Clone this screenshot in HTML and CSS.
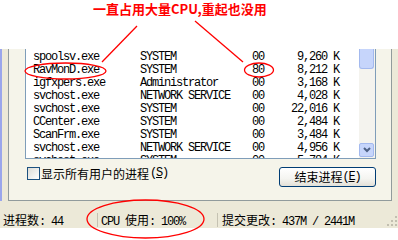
FILE: index.html
```html
<!DOCTYPE html>
<html lang="zh-CN">
<head>
  <meta charset="UTF-8" />
  <title>任务管理器</title>
  <link rel="stylesheet" href="styles.css">
</head>
<body>
  <div class="note">一直占用大量CPU,重起也没用</div>

  <!-- Processes tab -->
  <div class="window">
    <div class="page">
      <div class="list">
        <div class="rows">
          <div class="row"><span class="c-name">spoolsv.exe</span><span class="c-user">SYSTEM</span><span class="c-cpu">00</span><span class="c-mem">9,260 K</span></div>
          <div class="row"><span class="c-name">RavMonD.exe</span><span class="c-user">SYSTEM</span><span class="c-cpu">80</span><span class="c-mem">8,212 K</span></div>
          <div class="row"><span class="c-name">igfxpers.exe</span><span class="c-user">Administrator</span><span class="c-cpu">00</span><span class="c-mem">3,168 K</span></div>
          <div class="row"><span class="c-name">svchost.exe</span><span class="c-user">NETWORK SERVICE</span><span class="c-cpu">00</span><span class="c-mem">4,028 K</span></div>
          <div class="row"><span class="c-name">svchost.exe</span><span class="c-user">SYSTEM</span><span class="c-cpu">00</span><span class="c-mem">22,016 K</span></div>
          <div class="row"><span class="c-name">CCenter.exe</span><span class="c-user">SYSTEM</span><span class="c-cpu">00</span><span class="c-mem">2,484 K</span></div>
          <div class="row"><span class="c-name">ScanFrm.exe</span><span class="c-user">SYSTEM</span><span class="c-cpu">00</span><span class="c-mem">3,484 K</span></div>
          <div class="row"><span class="c-name">svchost.exe</span><span class="c-user">NETWORK SERVICE</span><span class="c-cpu">00</span><span class="c-mem">4,956 K</span></div>
          <div class="row"><span class="c-name">svchost.exe</span><span class="c-user">SYSTEM</span><span class="c-cpu">00</span><span class="c-mem">5,784 K</span></div>
        </div>
        <div class="scrollbar">
          <div class="thumb"></div>
          <div class="track"></div>
          <div class="arrow">
            <svg width="8" height="6" viewBox="0 0 8 6"><polyline points="1,1 4,4 7,1" fill="none" stroke="#4d6185" stroke-width="2"/></svg>
          </div>
        </div>
      </div>

      <div class="controls">
        <div class="check"><span class="box"></span>显示所有用户的进程<span class="lat">(<u>S</u>)</span></div>
        <div class="button">结束进程<span class="lat">(<u>E</u>)</span></div>
      </div>
    </div>
  </div>

  <div class="status">
    <div class="cell c1">进程数<span class="lat">: 44</span></div>
    <div class="cell c2"><span class="lat">CPU </span>使用<span class="lat">: 100%</span></div>
    <div class="cell c3">提交更改<span class="lat">: 437M / 2441M</span></div>
    <svg class="grip" width="12" height="12" viewBox="0 0 12 12">
      <rect x="9" y="1" width="2" height="2" fill="#c2bfb0"/>
      <rect x="5" y="5" width="2" height="2" fill="#c2bfb0"/>
      <rect x="9" y="5" width="2" height="2" fill="#c2bfb0"/>
      <rect x="1" y="9" width="2" height="2" fill="#c2bfb0"/>
      <rect x="5" y="9" width="2" height="2" fill="#c2bfb0"/>
      <rect x="9" y="9" width="2" height="2" fill="#c2bfb0"/>
    </svg>
  </div>

  <!-- red annotation marks -->
  <svg class="marks" width="398" height="240" viewBox="0 0 398 240">
    <g fill="none" stroke="#f00" stroke-width="1.3">
      <line x1="137" y1="26" x2="102" y2="62"/>
      <line x1="195" y1="21" x2="243" y2="62"/>
      <ellipse cx="65.5" cy="71" rx="40.5" ry="8"/>
      <ellipse cx="259" cy="70" rx="14.5" ry="7"/>
      <ellipse cx="145.5" cy="219" rx="58.5" ry="19"/>
    </g>
  </svg>
</body>
</html>
```

FILE: styles.css
```css
* {
  margin: 0;
  padding: 0;
  box-sizing: border-box;
}

body {
  width: 398px;
  height: 240px;
  position: relative;
  overflow: hidden;
  background: #fff;
  color: #000;
  font-family: "Noto Sans CJK SC", sans-serif;
  font-size: 12px;
}

.lat {
  font-family: "Liberation Mono", monospace;
  letter-spacing: -1.2px;
}

.note {
  height: 49px;
  padding: 2px 0 0 93px;
  color: #f00;
  font-weight: bold;
  font-size: 13px;
  line-height: 14px;
}

.window {
  display: flex;
  height: 152px;
  background: #ece9d8;
  border-left: 2px solid #9aa6ec;
  padding: 0 6px;
}

.page {
  flex: 1;
  background: #f5f4ea;
  border: 1px solid #919b9c;
  border-top: none;
  padding: 0 15px 0 16px;
}

.list {
  display: flex;
  height: 110px;
  background: #fff;
  border: 1px solid #7f9db9;
  border-top: none;
}

.rows {
  flex: 1;
  height: 109px;
  padding: 2px 0 0 7px;
  overflow: hidden;
  font-family: "Liberation Mono", monospace;
  letter-spacing: -1.2px;
}

.row {
  display: flex;
  height: 13px;
  line-height: 13px;
  white-space: nowrap;
}

.c-name { width: 107px; }
.c-user { width: 112px; }
.c-cpu { width: 30px; }
.c-mem { width: 57px; text-align: right; }

.scrollbar {
  width: 16px;
  display: flex;
  flex-direction: column;
  background: #f4f3ee;
}

.thumb {
  height: 20px;
  margin-right: 1px;
  background: #c6d5fb;
  border: 1px solid #a3b9ee;
  border-top: none;
  border-radius: 0 0 3px 3px;
}

.track {
  flex: 1;
}

.arrow {
  height: 14px;
  margin: 0 1px 1px 0;
  background: #c6d5fb;
  border: 1px solid #a3b9ee;
  border-radius: 2px;
  display: flex;
  align-items: center;
  justify-content: center;
}

.arrow svg {
  display: block;
}

.controls {
  display: flex;
  justify-content: space-between;
  align-items: flex-start;
  margin-top: 8px;
  padding-left: 2px;
}

.check {
  display: flex;
  align-items: center;
  gap: 1px;
  height: 13px;
  line-height: 13px;
}

.box {
  width: 13px;
  height: 13px;
  border: 1px solid #1c5180;
  background: linear-gradient(135deg, #dcdcd7, #fff);
}

.button {
  width: 97px;
  height: 20px;
  border: 1px solid #003c74;
  border-radius: 3px;
  background: linear-gradient(#fff, #f4f4f0 60%, #e3e0d7);
  display: flex;
  align-items: center;
  justify-content: center;
  line-height: 14px;
}

.status {
  display: flex;
  align-items: flex-start;
  height: 27px;
  padding-top: 12px;
  background: #ece9d8;
}

.cell {
  height: 14px;
  line-height: 14px;
  white-space: nowrap;
}

.c1 {
  width: 97px;
  padding-left: 3px;
}

.c2 {
  width: 120px;
  padding-left: 3px;
  border-left: 1px solid #c5c2b2;
}

.c3 {
  flex: 1;
  padding-left: 4px;
  border-left: 1px solid #c5c2b2;
}

.grip {
  align-self: flex-end;
  margin-bottom: 1px;
}

.marks {
  position: absolute;
  top: 0;
  left: 0;
  pointer-events: none;
}
```
